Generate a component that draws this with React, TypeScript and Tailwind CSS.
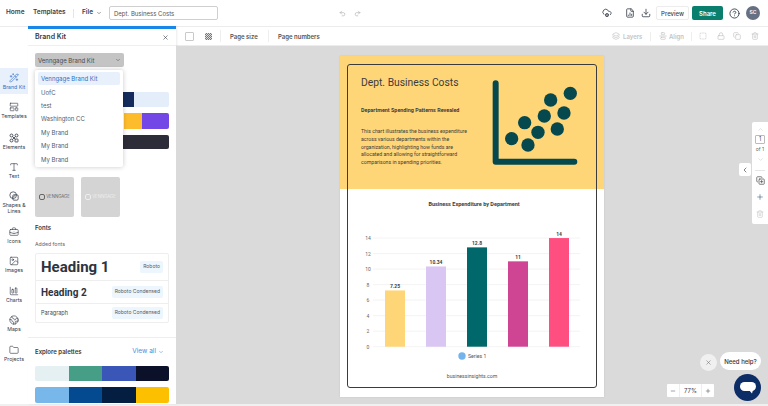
import {
  AlignVerticalJustifyCenter,
  BriefcaseBusiness,
  ChartColumnBig,
  ChevronDown,
  ChevronLeft,
  ChevronUp,
  CircleHelp,
  CloudCog,
  Copy,
  CopyPlus,
  Download,
  Earth,
  FileChartColumn,
  Folder,
  Image,
  Layers,
  LayoutTemplate,
  Lock,
  Minus,
  Plus,
  Redo2,
  SquareDashed,
  Trash2,
  Type,
  Undo2,
  Wand2,
  X,
} from 'lucide-react';

function ElementsIcon({ className }: { className?: string }) {
  return (
    <svg viewBox="0 0 24 24" className={className} fill="none" stroke="currentColor" strokeWidth="2">
      <circle cx="6" cy="6" r="3.5" />
      <circle cx="18" cy="6" r="3.5" />
      <circle cx="6" cy="18" r="3.5" />
      <rect x="14.5" y="14.5" width="7" height="7" rx="1" />
      <path d="M8.5 8.5l7 7M15.5 8.5l-7 7" />
    </svg>
  );
}

function ShapesLinesIcon({ className }: { className?: string }) {
  return (
    <svg viewBox="0 0 24 24" className={className} fill="none" stroke="currentColor" strokeWidth="1.8">
      <circle cx="10" cy="10" r="8" />
      <rect x="9" y="9" width="13" height="13" rx="3" />
      <path d="M9 16l7-7" />
    </svg>
  );
}

const railItems = [
  { label: 'Brand Kit', icon: Wand2, active: true, h: 'h-[26px]' },
  { label: 'Templates', icon: LayoutTemplate, h: 'h-[33px]' },
  { label: 'Elements', icon: ElementsIcon, h: 'h-[29px]' },
  { label: 'Text', icon: Type, h: 'h-[29px]' },
  { label: 'Shapes &\nLines', icon: ShapesLinesIcon, h: 'h-[35px]' },
  { label: 'Icons', icon: BriefcaseBusiness, h: 'h-[30px]' },
  { label: 'Images', icon: Image, h: 'h-[29px]' },
  { label: 'Charts', icon: ChartColumnBig, h: 'h-[30px]' },
  { label: 'Maps', icon: Earth, h: 'h-[29px]' },
  { label: 'Projects', icon: Folder, h: 'h-[30px]' },
];

const brands = ['Venngage Brand Kit', 'UofC', 'test', 'Washington CC', 'My Brand', 'My Brand', 'My Brand'];

const bars = [
  { x: 385, value: 7.25, color: '#ffd677' },
  { x: 426, value: 10.34, color: '#d9c6f3' },
  { x: 467, value: 12.8, color: '#00676b' },
  { x: 508, value: 11, color: '#d04494' },
  { x: 549, value: 14, color: '#ff4f81' },
];

const dots = [
  [517, 251], [566, 270], [556, 203], [596, 232], [615, 183],
  [654, 222], [634, 135], [674, 174], [693, 115],
];

function TopBar() {
  return (
    <div className="flex h-[27px] items-center border-b border-[#ececec] bg-white pl-[6px] pr-[8px] text-[#3c4350]">
      <span className="w-[17px] text-[6.5px] font-semibold">Home</span>
      <span className="ml-[10px] w-[30px] text-[6.5px] font-semibold">Templates</span>
      <div className="ml-[10px] h-[9px] w-px bg-[#e5e5e5]" />
      <span className="ml-[8px] w-[11px] text-[6.5px] font-semibold">File</span>
      <ChevronDown className="ml-[3px] h-[6px] w-[6px]" />
      <div className="ml-[7px] flex h-[14px] w-[109px] items-center rounded-[2px] border border-[#cfcfcf] px-[4px] text-[6px] text-[#555]">
        Dept. Business Costs
      </div>
      <Undo2 className="ml-[121px] h-[7px] w-[7px] text-[#a8a8a8]" />
      <Redo2 className="ml-[8px] h-[7px] w-[7px] text-[#a8a8a8]" />
      <div className="ml-auto flex items-center">
        <CloudCog className="h-[10px] w-[10px]" />
        <FileChartColumn className="ml-[13px] h-[10px] w-[10px]" />
        <Download className="ml-[6px] h-[10px] w-[10px]" />
        <div className="ml-[5px] flex h-[14px] w-[33px] items-center justify-center rounded-[2px] border border-[#ececec] text-[6px] font-medium">
          Preview
        </div>
        <div className="ml-[3px] flex h-[14px] w-[31px] items-center justify-center rounded-[2px] bg-[#0a7f6e] text-[6px] font-semibold text-white">
          Share
        </div>
        <CircleHelp className="ml-[6px] h-[11px] w-[11px]" />
        <div className="ml-[6px] flex h-[14px] w-[14px] items-center justify-center rounded-full bg-[#667085] text-[5px] font-semibold text-white">
          SC
        </div>
      </div>
    </div>
  );
}

function Rail() {
  return (
    <div className="flex w-[28px] shrink-0 flex-col bg-white pt-[41px]">
      {railItems.map(({ label, icon: Icon, active, h }) => (
        <div
          key={label}
          className={`flex ${h} flex-col items-center justify-center ${active ? 'bg-[#e8f0fb] text-[#2f6fc4]' : 'text-[#333a46]'}`}
        >
          <Icon className="h-[10px] w-[10px]" strokeWidth={1.5} />
          <span className="mt-[1px] whitespace-pre-line text-center text-[5.2px] leading-[6px]">{label}</span>
        </div>
      ))}
    </div>
  );
}

function Swatches({ className, colors }: { className: string; colors: string[] }) {
  return (
    <div className={`flex overflow-hidden rounded-[2px] ${className}`}>
      {colors.map((c) => (
        <div key={c} className="flex-1" style={{ backgroundColor: c }} />
      ))}
    </div>
  );
}

function FontRow({ sample, font, className }: { sample: string; font: string; className: string }) {
  return (
    <div className={`flex items-center justify-between border-[#eeeeee] pl-[5px] pr-[5px] ${className}`}>
      {sample === 'Heading 1' && <span className="font-['Roboto'] text-[15px] font-bold text-[#2d3440]">{sample}</span>}
      {sample === 'Heading 2' && <span className="font-['Roboto'] text-[10px] font-bold text-[#2d3440]">{sample}</span>}
      {sample === 'Paragraph' && <span className="text-[5.5px] text-[#444]">{sample}</span>}
      <span className="rounded-[2px] bg-[#edf5fd] px-[3px] py-[2px] text-[5px] text-[#555c68]">{font}</span>
    </div>
  );
}

function BrandPanel() {
  return (
    <div className="relative -mt-px w-[148px] shrink-0 border-t-[3px] border-[#1a86e8] bg-white text-[#333a46] shadow-[1px_0_2px_rgba(0,0,0,0.08)]">
      <div className="flex h-[17px] items-center justify-between border-b border-[#efefef] px-[7px]">
        <span className="text-[7px] font-semibold">Brand Kit</span>
        <X className="h-[7px] w-[7px]" />
      </div>
      <div className="px-[7px] pt-[7px]">
        <div className="flex h-[14px] w-[89px] items-center justify-between rounded-[2px] bg-[#c4c4c4] px-[3px] text-[6px] text-[#4b4b4b]">
          Venngage Brand Kit
          <ChevronDown className="h-[6px] w-[6px]" />
        </div>

        <div className="mt-[25px] flex h-[15px] justify-end overflow-hidden rounded-[2px] bg-[#e4eefb]">
          <div className="mr-[35px] w-[11px] bg-[#142d5c]" />
        </div>
        <div className="mt-[6px] flex h-[16px] justify-end overflow-hidden rounded-[2px]">
          <div className="w-[18px] bg-[#fdbc2c]" />
          <div className="w-[27px] bg-[#7347e6]" />
        </div>
        <div className="mt-[6px] h-[14px] rounded-[2px] bg-[#2d2d3a]" />

        <div className="mt-[28px] flex gap-[7px]">
          <div className="flex h-[40px] w-[39px] items-center justify-center gap-[1px] rounded-[2px] bg-[#d4d4d4] text-[4.3px] text-[#666]">
            <div className="h-[6px] w-[6px] rounded-[2px] border-[0.5px] border-[#666]" />
            VENNGAGE
          </div>
          <div className="flex h-[40px] w-[39px] items-center justify-center gap-[1px] rounded-[2px] bg-[#d4d4d4] text-[4.3px] text-[#eeeeee]">
            <div className="h-[6px] w-[6px] rounded-[2px] border-[0.5px] border-[#eeeeee]" />
            VENNGAGE
          </div>
        </div>

        <div className="mt-[7px] text-[6px] font-semibold leading-[8px]">Fonts</div>
        <div className="mt-[8px] text-[5.2px] leading-[8px] text-[#666]">Added fonts</div>

        <div className="mt-[5px] h-[70px] rounded-[2px] border border-[#eeeeee]">
          <FontRow sample="Heading 1" font="Roboto" className="h-[27px] border-b" />
          <FontRow sample="Heading 2" font="Roboto Condensed" className="h-[23px] border-b" />
          <FontRow sample="Paragraph" font="Roboto Condensed" className="h-[18px]" />
        </div>
      </div>

      <div className="mt-[14px] border-t border-[#eeeeee] px-[7px] pt-[9px]">
        <div className="flex items-center justify-between pr-[5px]">
          <span className="text-[6px] font-semibold">Explore palettes</span>
          <span className="flex items-center gap-[2px] text-[6.5px] text-[#3f8fe0]">
            View all
            <ChevronDown className="h-[6px] w-[6px]" />
          </span>
        </div>
        <Swatches className="mt-[9px] h-[15px]" colors={['#e4f0f2', '#459e85', '#3a57b8', '#0a1128']} />
        <Swatches className="mt-[6px] h-[16px]" colors={['#77b7ea', '#044a90', '#041e42', '#fdc000']} />
      </div>

      <div className="absolute left-[7px] top-[41px] h-[97px] w-[88px] rounded-[2px] bg-white px-[3px] pt-[2px] shadow-[0_0_5px_rgba(0,0,0,0.22)]">
        {brands.map((name, i) => (
          <div
            key={name + i}
            className={`flex h-[13.4px] items-center rounded-[2px] px-[3px] text-[6px] ${i === 0 ? 'bg-[#e8f0fb] text-[#2f6fc4]' : 'text-[#555c68]'}`}
          >
            {name}
          </div>
        ))}
      </div>
    </div>
  );
}

function ToolBar() {
  return (
    <div className="flex h-[19px] items-center border-b border-[#ececec] bg-white pl-[9px] pr-[9px] text-[6px] font-semibold text-[#555]">
      <div className="h-[9px] w-[9px] rounded-[1px] border border-[#c9c9c9]" />
      <div className="ml-[11px] h-[7px] w-[7px] bg-[repeating-conic-gradient(#777_0_25%,#ddd_0_50%)] bg-[length:2px_2px]" />
      <div className="ml-[8px] h-[12px] w-px bg-[#eeeeee]" />
      <span className="ml-[9px] w-[28px] whitespace-nowrap">Page size</span>
      <div className="ml-[10px] h-[12px] w-px bg-[#eeeeee]" />
      <span className="ml-[9px] whitespace-nowrap">Page numbers</span>
      <div className="ml-auto flex items-center text-[#c4c4c4]">
        <Layers className="h-[8px] w-[8px]" />
        <span className="ml-[3px] w-[19px]">Layers</span>
        <div className="mx-[8px] h-[9px] w-px bg-[#eeeeee]" />
        <AlignVerticalJustifyCenter className="h-[8px] w-[8px]" />
        <span className="ml-[2px] w-[15px]">Align</span>
        <div className="mx-[7px] h-[9px] w-px bg-[#eeeeee]" />
        <SquareDashed className="h-[8px] w-[8px]" />
        <Lock className="ml-[10px] h-[8px] w-[8px]" />
        <Copy className="ml-[8px] h-[8px] w-[8px]" />
        <Trash2 className="ml-[10px] h-[8px] w-[8px]" />
      </div>
    </div>
  );
}

function ScatterIcon() {
  return (
    <svg viewBox="455 75 262 255" className="h-[85px] w-[87.3px]" fill="#05494f">
      <path d="M469 85V320H705" fill="none" stroke="#05494f" strokeWidth="18" strokeLinecap="round" strokeLinejoin="round" />
      {dots.map(([cx, cy]) => (
        <circle key={`${cx}-${cy}`} cx={cx} cy={cy} r="20" />
      ))}
    </svg>
  );
}

function BarChart() {
  const y = (v: number) => 346.7 - v * 7.76;
  return (
    <svg viewBox="340 189 264 180" className="h-[180px] w-[264px]" fontFamily="Roboto, sans-serif">
      <text x="474" y="206" textAnchor="middle" fontSize="5.5" fontWeight="700" fill="#3a3f4a">
        Business Expenditure by Department
      </text>
      {[0, 2, 4, 6, 8, 10, 12, 14].map((v) => (
        <g key={v}>
          <line x1="373" x2="580" y1={y(v)} y2={y(v)} stroke="#f0f0f0" strokeWidth="0.8" />
          <text x="368" y={y(v) + 2} textAnchor="middle" fontSize="5" fill="#666">{v}</text>
        </g>
      ))}
      {bars.map((b) => (
        <g key={b.x}>
          <rect x={b.x} y={y(b.value)} width="20" height={b.value * 7.76} fill={b.color} />
          <text x={b.x + 10} y={y(b.value) - 2.5} textAnchor="middle" fontSize="5" fontWeight="700" fill="#3a3f4a">
            {b.value}
          </text>
        </g>
      ))}
      <circle cx="462" cy="356" r="3.7" fill="#74b4ec" />
      <text x="468" y="358" fontSize="5.2" fill="#555">Series 1</text>
    </svg>
  );
}

function DocPage() {
  return (
    <div className="relative ml-[164px] mt-[10px] h-[341px] w-[264px] bg-white font-['Roboto'] shadow-[0_0_2px_rgba(0,0,0,0.1)]">
      <div className="flex h-[133px] justify-between bg-[#ffd677] pl-[21px] pr-[26px] pt-[20px] text-[#3c3c40]">
        <div className="w-[112px]">
          <h1 className="whitespace-nowrap text-[10.3px] leading-[14px]">Dept. Business Costs</h1>
          <p className="mt-[16px] whitespace-nowrap text-[5.4px] font-bold leading-[8px]">
            Department Spending Patterns Revealed
          </p>
          <p className="mt-[14px] w-[112px] text-[5.2px] leading-[7.8px]">
            This chart illustrates the business expenditure across various departments within the organization,
            highlighting how funds are allocated and allowing for straightforward comparisons in spending priorities.
          </p>
        </div>
        <div className="pt-[4px]">
          <ScatterIcon />
        </div>
      </div>
      <BarChart />
      <p className="mt-[4px] text-center text-[5.2px] leading-[6px] text-[#555]">businessinsights.com</p>
      <div className="pointer-events-none absolute inset-x-[7px] bottom-[9px] top-[8px] rounded-[3px] border border-[#3b3b3b]" />
    </div>
  );
}

function Canvas() {
  return (
    <div className="relative flex-1 bg-[#dadada]">
      <DocPage />

      <div className="absolute right-0 top-[76px] flex h-[102px] w-[16px] flex-col items-center rounded-l-[2px] bg-white pt-[4px] text-[#999]">
        <ChevronUp className="h-[7px] w-[7px] text-[#ccc]" />
        <div className="mt-[2px] flex h-[9px] w-[10px] items-center justify-center rounded-[1px] border border-[#bbbbbb] text-[5.5px] text-[#444]">
          1
        </div>
        <span className="mt-[2px] text-[5px] leading-[7px] text-[#666]">of 1</span>
        <ChevronDown className="mt-[3px] h-[7px] w-[7px] text-[#ccc]" />
        <div className="mt-[7px] h-px w-[10px] bg-[#e5e5e5]" />
        <CopyPlus className="mt-[5px] h-[9px] w-[9px] text-[#555]" />
        <Plus className="mt-[8px] h-[8px] w-[8px] text-[#4a6a8a]" />
        <Trash2 className="mt-[9px] h-[8px] w-[8px] text-[#ccc]" />
      </div>
      <div className="absolute right-[17px] top-[117px] flex h-[13px] w-[12px] items-center justify-center rounded-[2px] bg-white">
        <ChevronLeft className="h-[8px] w-[8px] text-[#444]" />
      </div>

      <div className="absolute bottom-[7px] right-[54px] flex h-[13px] w-[47px] items-center rounded-[1px] bg-white text-[6px] text-[#444]">
        <div className="flex h-full w-[13px] items-center justify-center border-r border-[#eeeeee]">
          <Minus className="h-[6px] w-[6px]" />
        </div>
        <span className="flex-1 text-center">77%</span>
        <div className="flex h-full w-[13px] items-center justify-center border-l border-[#eeeeee]">
          <Plus className="h-[6px] w-[6px]" />
        </div>
      </div>
      <div className="absolute bottom-[33px] right-[51px] flex h-[17px] w-[17px] items-center justify-center rounded-full bg-[#f0f0f0]">
        <X className="h-[7px] w-[7px] text-[#777]" />
      </div>
      <div className="absolute bottom-[34px] right-[7px] flex h-[18px] w-[41px] items-center justify-center rounded-full bg-white text-[6px] font-medium text-[#333]">
        Need help?
      </div>
      <div className="absolute bottom-[3px] right-[7px] flex h-[27px] w-[27px] items-center justify-center rounded-full bg-[#0c2d66]">
        <svg viewBox="0 0 16 12" className="h-[12px] w-[16px]" fill="#ffffff">
          <rect x="0" y="0" width="16" height="9" rx="4.5" />
          <path d="M9 8h4l-1 3.5z" />
        </svg>
      </div>
    </div>
  );
}

export default function App() {
  return (
    <div className="flex h-[406px] w-[768px] flex-col overflow-hidden bg-white font-['Inter',sans-serif]">
      <TopBar />
      <div className="flex min-h-0 flex-1">
        <Rail />
        <BrandPanel />
        <div className="flex min-w-0 flex-1 flex-col">
          <ToolBar />
          <Canvas />
        </div>
      </div>
      <div className="h-[2px] bg-[#f0f0f0]" />
    </div>
  );
}
